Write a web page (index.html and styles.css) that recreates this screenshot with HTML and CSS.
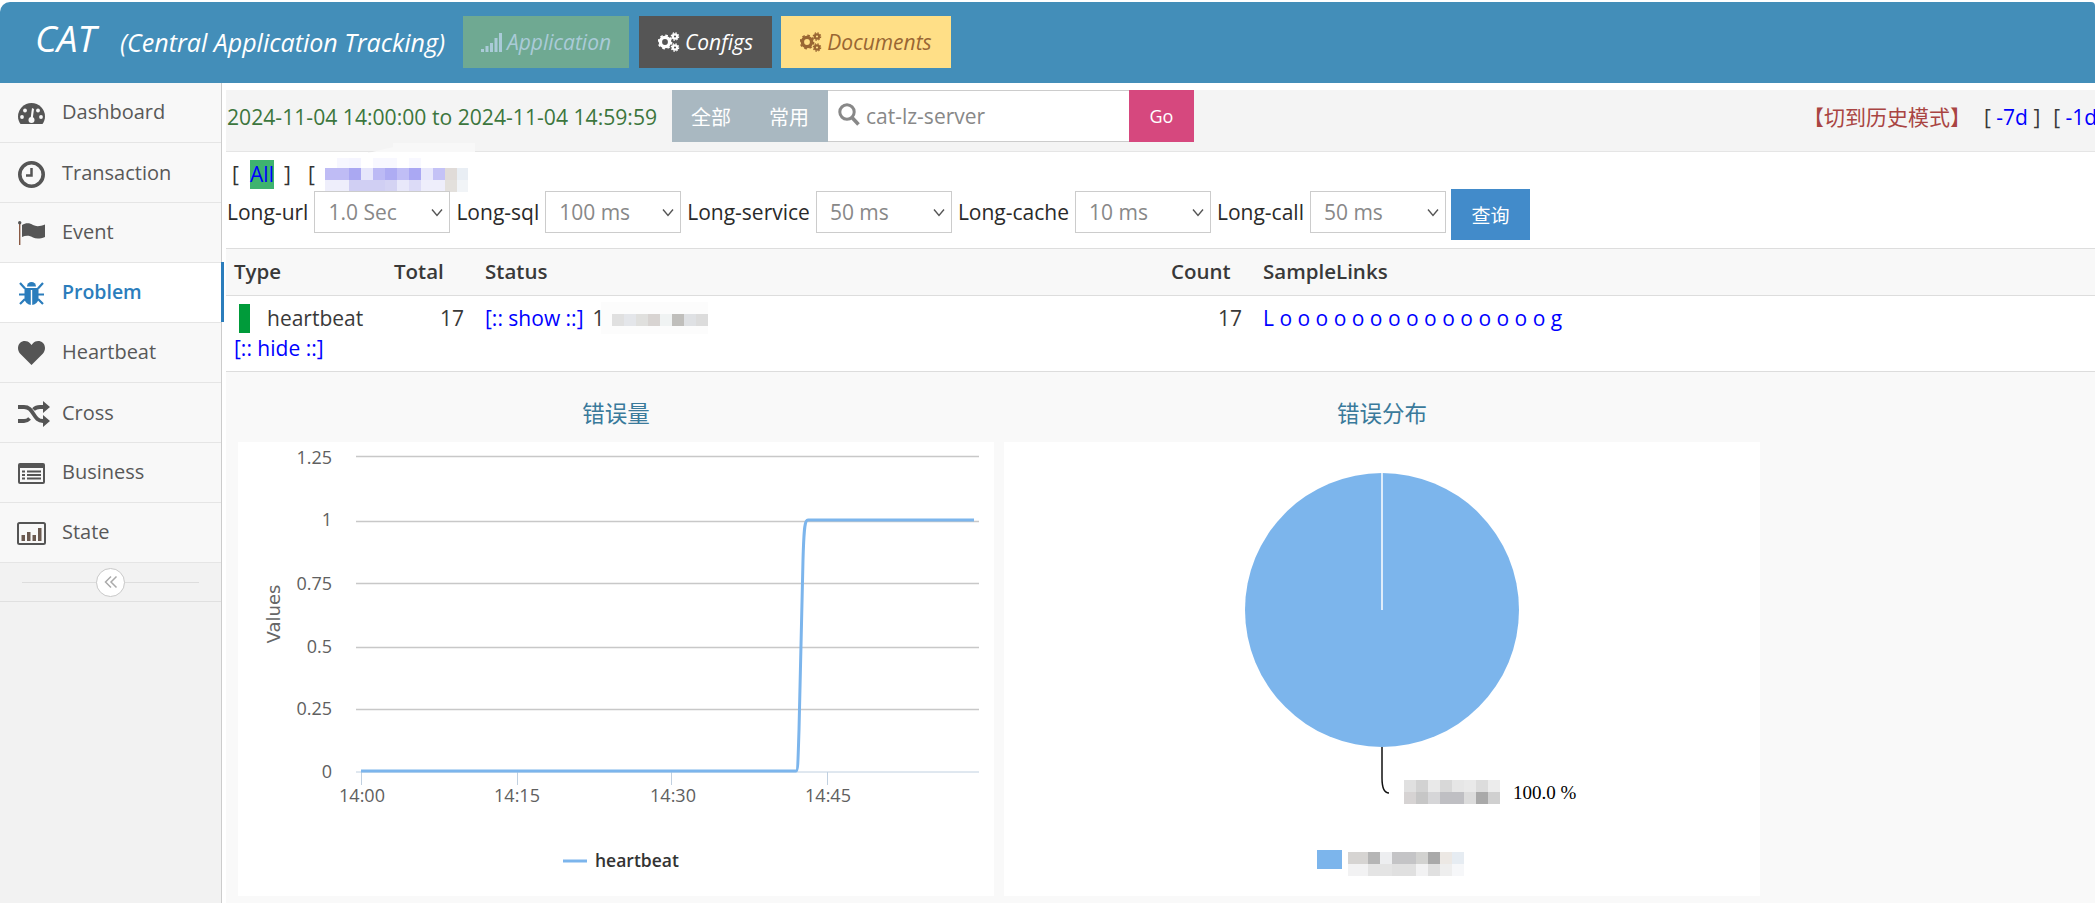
FILE: index.html
```html
<!DOCTYPE html>
<html lang="zh">
<head>
<meta charset="utf-8">
<title>CAT</title>
<link rel="stylesheet" href="styles.css">
</head>
<body>
<svg class="defs" width="0" height="0">
  <symbol id="gears" viewBox="0 0 22 20">
    <circle cx="7" cy="10" r="4.6" fill="none" stroke="currentColor" stroke-width="3.4"/>
    <circle cx="7" cy="10" r="6.6" fill="none" stroke="currentColor" stroke-width="1.6" stroke-dasharray="2.6 2.6"/>
    <circle cx="17" cy="4.5" r="2.2" fill="none" stroke="currentColor" stroke-width="2.2"/>
    <circle cx="17" cy="4.5" r="3.7" fill="none" stroke="currentColor" stroke-width="1.2" stroke-dasharray="1.5 1.4"/>
    <circle cx="17" cy="15.5" r="2.2" fill="none" stroke="currentColor" stroke-width="2.2"/>
    <circle cx="17" cy="15.5" r="3.7" fill="none" stroke="currentColor" stroke-width="1.2" stroke-dasharray="1.5 1.4"/>
  </symbol>
</svg>
<header class="top">
  <div class="brand"><span class="brand-cat">CAT</span><span class="brand-sub">(Central Application Tracking)</span></div>
  <nav class="top-nav">
    <a class="top-btn top-app"><svg class="ico-bars" viewBox="0 0 21 19"><path d="M0 16h3v3H0zM4.500 13h3v6h-3zM9 10h3v9H9zM13.500 5h3v14h-3zM18 0h3v19h-3z" fill="currentColor"/></svg>Application</a>
    <a class="top-btn top-cfg"><svg class="ico-gears"><use href="#gears"/></svg>Configs</a>
    <a class="top-btn top-doc"><svg class="ico-gears"><use href="#gears"/></svg>Documents</a>
  </nav>
</header>
<div class="layout">
  <aside class="sidebar">
    <ul class="menu">
      <li class="menu-item"><span class="menu-ico"><svg width="27" height="21" viewBox="0 0 27 21"><path d="M2.500 21C.8 18.500 0 16 0 13.500a13.500 13.500 0 0 1 27 0c0 2.500-.8 5-2.500 7.500z" fill="currentColor"/><g fill="#f8f8f8"><circle cx="4" cy="14" r="1.900"/><circle cx="7" cy="7.500" r="1.900"/><circle cx="20" cy="7.500" r="1.900"/><circle cx="23" cy="14" r="1.900"/><circle cx="13.500" cy="17" r="3"/><path d="M12.500 16l1.500-11 2 1-1.500 11z"/></g></svg></span>Dashboard</li>
      <li class="menu-item menu-low"><span class="menu-ico"><svg width="27" height="27" viewBox="0 0 27 27"><circle cx="13.500" cy="13.500" r="11.700" fill="none" stroke="currentColor" stroke-width="3.600"/><path d="M13.500 7v7.500H8" fill="none" stroke="currentColor" stroke-width="2.500"/></svg></span>Transaction</li>
      <li class="menu-item"><span class="menu-ico"><svg width="27" height="24" viewBox="0 0 27 24"><path d="M1 2h1.400v22H1z" fill="#8a5a44"/><circle cx="1.700" cy="1.700" r="1.700" fill="currentColor"/><path d="M4 4c4-2.500 8-2 11 0 3 1.700 7 1.500 12-.5v12.500c-5 2-9 2-12 .5-3-2-7-2.500-11-.5z" fill="currentColor"/></svg></span>Event</li>
      <li class="menu-item is-active"><span class="menu-ico"><svg width="25" height="24" viewBox="0 0 25 24"><path d="M8 5.500a4.500 4.500 0 0 1 9 0z" fill="currentColor"/><path d="M5.500 7h14v10a7 7 0 0 1-14 0z" fill="currentColor"/><path d="M12.500 9v15" stroke="#fff" stroke-width="1.400"/><path d="M1 2l5 5.500M24 2l-5 5.500M0 13.500h6M25 13.500h-6M1 23l5-5M24 23l-5-5" stroke="currentColor" stroke-width="2.200" fill="none"/></svg></span>Problem</li>
      <li class="menu-item"><span class="menu-ico"><svg width="27" height="24" viewBox="0 0 27 24"><path d="M13.500 24L2 12.500C-.7 9.500-.6 4.500 2 2c3-2.800 7.500-2.500 10 .3l1.500 1.700L15 2.300c2.500-2.800 7-3.100 10-.3 2.600 2.500 2.700 7.500 0 10.500z" fill="currentColor"/></svg></span>Heartbeat</li>
      <li class="menu-item menu-low"><span class="menu-ico ico-wide"><svg width="32" height="26" viewBox="0 0 32 26"><path d="M0 6h6c5 0 7 3 9.500 7s4.500 7 9.500 7h1M0 20h6c2.500 0 4.200-1 5.600-2.500M15.500 8.500C17 7 19 6 22 6h4" fill="none" stroke="currentColor" stroke-width="3.800"/><path d="M25 0l7 6-7 6zM25 14l7 6-7 6z" fill="currentColor"/></svg></span>Cross</li>
      <li class="menu-item"><span class="menu-ico"><svg width="27" height="21" viewBox="0 0 27 21"><rect width="27" height="21" rx="2" fill="currentColor"/><rect x="2" y="5" width="23" height="14" fill="#f8f8f8"/><path d="M4 7.500h3v2H4zM9 7.500h14v2H9zM4 11h3v2H4zM9 11h14v2H9zM4 14.500h3v2H4zM9 14.500h14v2H9z" fill="currentColor"/></svg></span>Business</li>
      <li class="menu-item"><span class="menu-ico"><svg width="29" height="23" viewBox="0 0 29 23"><rect x="1" y="1" width="27" height="21" rx="1.500" fill="none" stroke="currentColor" stroke-width="2"/><path d="M4.500 13h3.500v6H4.500zM10 10h3.500v9H10zM15.500 13h3.500v6h-3.500zM21 6h3.500v13H21z" fill="#6b5a50"/></svg></span>State</li>
    </ul>
    <div class="collapse"><span class="collapse-btn"><svg width="14" height="14" viewBox="0 0 14 14"><path d="M7 1.500L1.500 7 7 12.500M12.500 1.500L7 7l5.500 5.500" fill="none" stroke="#aaa" stroke-width="1.500"/></svg></span></div>
  </aside>
  <main class="main">
    <div class="crumbs">
      <span class="date-range">2024-11-04 14:00:00 to 2024-11-04 14:59:59</span>
      <div class="search">
        <span class="scope">全部</span><span class="scope">常用</span>
        <div class="search-box"><svg class="ico-search" viewBox="0 0 22 23"><circle cx="9" cy="9" r="7.200" fill="none" stroke="currentColor" stroke-width="3"/><path d="M14 14.500l6.500 7" stroke="currentColor" stroke-width="3.600"/></svg><span class="search-text">cat-lz-server</span></div>
        <span class="go">Go</span>
      </div>
      <div class="history"><span class="history-mode">【切到历史模式】</span><span class="bracket">[ <a>-7d</a> ]</span><span class="bracket">[ <a>-1d</a> ]</span></div>
    </div>
    <section class="filters">
      <div class="domains">
        <span class="br">[</span><a class="all">All</a><span class="br br-close">]</span><span class="br br-next">[</span>
        <svg class="mosaic-domain" width="155" height="36" viewBox="0 0 155 36"><g>
          <path d="M55-5L80-11V-15H162V-6H55z" fill="#f8f8f8"/>
          <rect x="24" y="0" width="12" height="10" fill="#f7f7ff"/><rect x="36" y="0" width="12" height="10" fill="#f5f5ff"/><rect x="60" y="0" width="24" height="10" fill="#f8f8ff"/><rect x="96" y="0" width="12" height="10" fill="#f8f8ff"/>
          <rect x="12" y="10" width="24" height="12" fill="#bfbcf5"/><rect x="36" y="10" width="12" height="12" fill="#aaa8f2"/><rect x="48" y="10" width="12" height="12" fill="#e6e6fb"/><rect x="60" y="10" width="12" height="12" fill="#bcbaf5"/><rect x="72" y="10" width="12" height="12" fill="#aeacf3"/><rect x="84" y="10" width="12" height="12" fill="#c0bef6"/><rect x="96" y="10" width="12" height="12" fill="#aaa8f3"/><rect x="108" y="10" width="12" height="12" fill="#e8e8fb"/><rect x="120" y="10" width="12" height="12" fill="#c4c2f6"/><rect x="132" y="10" width="12" height="12" fill="#e0dbd8"/><rect x="144" y="10" width="11" height="12" fill="#e9eef4"/>
          <rect x="12" y="22" width="24" height="12" fill="#eeeefb"/><rect x="36" y="22" width="36" height="12" fill="#d0cff3"/><rect x="72" y="22" width="12" height="12" fill="#d4d3f3"/><rect x="84" y="22" width="12" height="12" fill="#e8e8fa"/><rect x="96" y="22" width="12" height="12" fill="#dcdbf7"/><rect x="108" y="22" width="24" height="12" fill="#eeeefb"/><rect x="132" y="22" width="12" height="12" fill="#e3e0dc"/><rect x="144" y="22" width="11" height="12" fill="#f1f4f7"/>
        </g></svg>
      </div>
      <form class="thresholds">
        <label class="th-label">Long-url</label><select class="th-select"><option>1.0 Sec</option></select>
        <label class="th-label">Long-sql</label><select class="th-select"><option>100 ms</option></select>
        <label class="th-label">Long-service</label><select class="th-select"><option>50 ms</option></select>
        <label class="th-label">Long-cache</label><select class="th-select"><option>10 ms</option></select>
        <label class="th-label">Long-call</label><select class="th-select"><option>50 ms</option></select>
        <button class="query" type="button">查询</button>
      </form>
    </section>
    <table class="problems">
      <colgroup><col class="c-type"><col class="c-total"><col class="c-status"><col class="c-count"><col></colgroup>
      <thead><tr><th>Type</th><th>Total</th><th>Status</th><th>Count</th><th>SampleLinks</th></tr></thead>
      <tbody><tr>
        <td><div class="type-line"><span class="green-bar"></span>heartbeat</div><a class="lnk">[:: hide ::]</a></td>
        <td class="num">17</td>
        <td><div class="status-line"><a class="lnk">[:: show ::]</a><span class="status-one">1</span><svg class="mosaic-status" width="107" height="32" viewBox="0 0 107 32"><rect width="107" height="32" fill="#fcfcfc"/><rect x="11" y="12" width="12" height="12" fill="#e0e0e0"/><rect x="23" y="12" width="12" height="12" fill="#e4e6ea"/><rect x="35" y="12" width="12" height="12" fill="#e0e0de"/><rect x="47" y="12" width="12" height="12" fill="#d8d4d2"/><rect x="59" y="12" width="12" height="12" fill="#f0f3f3"/><rect x="71" y="12" width="12" height="12" fill="#c0bfbc"/><rect x="83" y="12" width="12" height="12" fill="#dfe1e4"/><rect x="95" y="12" width="12" height="12" fill="#dcdcdc"/></svg></div></td>
        <td class="num">17</td>
        <td><a class="lnk samples">L o o o o o o o o o o o o o o o g</a></td>
      </tr></tbody>
    </table>
    <section class="charts">
      <div class="chart-col">
        <h4 class="chart-title">错误量</h4>
        <div class="chart-card">
          <svg class="chart-svg" width="756" height="454" viewBox="238 442 756 454">
            <g class="grid"><path d="M356 456.500H979M356 521.500H979M356 583.500H979M356 647.500H979M356 709.500H979"/></g>
            <path class="axis" d="M356 772H979M361.500 772v13M517.500 772v13M671.500 772v13M827.500 772v13"/>
            <g class="y-labels"><text x="332" y="464">1.25</text><text x="332" y="526">1</text><text x="332" y="590">0.75</text><text x="332" y="653">0.5</text><text x="332" y="715">0.25</text><text x="332" y="778">0</text></g>
            <g class="x-labels"><text x="362" y="802">14:00</text><text x="517" y="802">14:15</text><text x="673" y="802">14:30</text><text x="828" y="802">14:45</text></g>
            <text class="y-title" transform="translate(280 614) rotate(-90)">Values</text>
            <path class="series" d="M361 771H796C798 771 798 760 799 730L803 560C804 525 805 520 808 520H974"/>
            <path class="legend-line" d="M563 861H587"/>
            <text class="legend-text" x="595" y="867">heartbeat</text>
          </svg>
        </div>
      </div>
      <div class="chart-col">
        <h4 class="chart-title">错误分布</h4>
        <div class="chart-card">
          <svg class="chart-svg" width="756" height="454" viewBox="1004 442 756 454">
            <circle class="pie" cx="1382" cy="610" r="137"/>
            <path class="pie-seam" d="M1382 473V610"/>
            <path class="pie-conn" d="M1382 747V778C1382 788 1384 793 1389 793"/>
            <g>
              <rect x="1404" y="780" width="12" height="12" fill="#e0e0e0"/><rect x="1416" y="780" width="12" height="12" fill="#d2d2d2"/><rect x="1428" y="780" width="12" height="12" fill="#e9e9e9"/><rect x="1440" y="780" width="12" height="12" fill="#d8d8d8"/><rect x="1452" y="780" width="12" height="12" fill="#e6e6e6"/><rect x="1464" y="780" width="12" height="12" fill="#e9e9e9"/><rect x="1476" y="780" width="12" height="12" fill="#dcdcdc"/><rect x="1488" y="780" width="12" height="12" fill="#ececec"/>
              <rect x="1404" y="792" width="12" height="12" fill="#d6d3d3"/><rect x="1416" y="792" width="12" height="12" fill="#c6c6c6"/><rect x="1428" y="792" width="12" height="12" fill="#d6d6d8"/><rect x="1440" y="792" width="24" height="12" fill="#bfbfc3"/><rect x="1464" y="792" width="12" height="12" fill="#dcdcdc"/><rect x="1476" y="792" width="12" height="12" fill="#a9a9a9"/><rect x="1488" y="792" width="12" height="12" fill="#d0d0d0"/>
            </g>
            <text class="pie-label" x="1513" y="799">100.0 %</text>
            <rect class="pie-key" x="1317" y="850" width="25" height="19"/>
            <g>
              <rect x="1348" y="852" width="20" height="12" fill="#d6d4d2"/><rect x="1368" y="852" width="12" height="12" fill="#b5b5b5"/><rect x="1380" y="852" width="12" height="12" fill="#edeef0"/><rect x="1392" y="852" width="24" height="12" fill="#c4c4c6"/><rect x="1416" y="852" width="12" height="12" fill="#d2d2d0"/><rect x="1428" y="852" width="12" height="12" fill="#a9a9a9"/><rect x="1440" y="852" width="12" height="12" fill="#ece8e4"/><rect x="1452" y="852" width="12" height="12" fill="#e6ecf2"/>
              <rect x="1348" y="864" width="20" height="12" fill="#f2f2f3"/><rect x="1368" y="864" width="24" height="12" fill="#e4e4e4"/><rect x="1392" y="864" width="24" height="12" fill="#e0e0e0"/><rect x="1416" y="864" width="12" height="12" fill="#f2f2f3"/><rect x="1428" y="864" width="12" height="12" fill="#e0e0e0"/><rect x="1440" y="864" width="12" height="12" fill="#eeeeee"/><rect x="1452" y="864" width="12" height="12" fill="#f6f7f9"/>
            </g>
          </svg>
        </div>
      </div>
    </section>
  </main>
</div>
</body>
</html>
```
FILE: styles.css
```css
* { box-sizing: border-box; }
html, body { margin: 0; padding: 0; height: 100%; overflow: hidden; }
body {
  background: #fff;
  font-family: "Open Sans", "Noto Sans CJK SC", sans-serif;
  font-size: 21px;
  color: #393939;
  padding-top: 2px;
}
.defs { position: absolute; }
a { color: #0000ff; text-decoration: none; }

/* header */
.top {
  height: 81px;
  background: #438eb9;
  border-top-left-radius: 10px;
  border-top-right-radius: 4px;
  display: flex;
  align-items: center;
  padding-left: 35px;
  color: #fff;
}
.brand { width: 428px; font-style: italic; font-weight: 400; white-space: nowrap; display: flex; align-items: baseline; margin-top: -10px; }
.brand-cat { font-size: 37px; width: 85px; }
.brand-sub { font-size: 25px; }
.top-nav { display: flex; margin-top: -1px; }
.top-btn {
  height: 52px;
  display: flex;
  align-items: center;
  justify-content: center;
  font-style: italic;
  font-size: 21px;
  gap: 5px;
}
.top-app { width: 166px; background: #6fa992; color: #aacbd8; margin-right: 10px; }
.top-cfg { width: 133px; background: #555; color: #fff; margin-right: 9px; }
.top-doc { width: 170px; background: #ffdf87; color: #996633; }
.ico-bars { width: 21px; height: 19px; }
.ico-gears { width: 22px; height: 20px; }

/* layout */
.layout { display: flex; height: 820px; }
.sidebar {
  width: 222px;
  flex: none;
  background: #f2f2f2;
  border-right: 1px solid #ccc;
}
.menu { list-style: none; margin: 0; padding: 0; }
.menu-item {
  position: relative;
  height: 60px;
  padding-bottom: 2px;
  display: flex;
  align-items: center;
  background: #f8f8f8;
  border-bottom: 1px solid #e5e5e5;
  color: #585858;
  font-size: 20px;
}
.menu-item.menu-low { padding-bottom: 0; }
.menu-item.is-active { background: #fff; color: #2b7dbc; font-weight: 600; font-size: 19.500px; }
.menu-item.is-active::after {
  content: "";
  position: absolute;
  right: -3px;
  top: -1px;
  bottom: 0;
  width: 3px;
  background: #2b7dbc;
}
.menu-ico { width: 62px; flex: none; display: flex; justify-content: center; margin-top: 3px; color: #555; }
.menu-ico.ico-wide { padding-left: 5px; }
.is-active .menu-ico { color: #2b7dbc; }
.collapse {
  height: 39px;
  position: relative;
  display: flex;
  align-items: center;
  justify-content: center;
  border-bottom: 1px solid #e0e0e0;
  background: linear-gradient(#ddd, #ddd) center / 177px 1px no-repeat;
}
.collapse-btn {
  width: 29px;
  height: 29px;
  border-radius: 50%;
  background: #fff;
  border: 1px solid #c8c8c8;
  display: flex;
  align-items: center;
  justify-content: center;
}

/* main */
.main { flex: 1; min-width: 0; padding: 7px 0 0 4px; overflow: hidden; }
.crumbs {
  height: 62px;
  background: #f4f4f4;
  border-bottom: 1px solid #e5e5e5;
  display: flex;
  white-space: nowrap;
  overflow: hidden;
}
.date-range { width: 446px; flex: none; padding: 12px 0 0 1px; color: #3c763d; font-size: 21.150px; }
.search { display: flex; height: 52px; flex: none; }
.scope { width: 78px; background: #a9b8c1; color: #fff; font-size: 20px; display: flex; align-items: center; justify-content: center; }
.search-box {
  width: 301px;
  background: #fff;
  border-top: 1px solid #ccc;
  border-bottom: 1px solid #ccc;
  display: flex;
  align-items: center;
  padding-left: 10px;
  color: #888;
}
.ico-search { width: 22px; height: 23px; margin-right: 6px; margin-top: -3px; }
.go { width: 65px; background: #d6487e; color: #fff; font-size: 18px; display: flex; align-items: center; justify-content: center; }
.history { margin-left: 609px; flex: none; padding-top: 11px; }
.history-mode { color: #a94442; margin-right: 13px; }
.bracket { color: #393939; margin-right: 13px; }

.filters { height: 97px; border-bottom: 1px solid #ddd; padding-left: 1px; }
.domains { height: 39px; padding: 8px 0 0 5px; display: flex; color: #333; }
.br { line-height: 29px; width: 7px; font-weight: 500; }
.all { width: 24px; height: 29px; line-height: 29px; background: #3eb36f; text-align: center; margin-left: 11px; }
.br-close { margin-left: 10px; }
.br-next { margin-left: 17px; width: 5px; }
.mosaic-domain { margin-top: -2px; overflow: visible; }
.thresholds { display: flex; align-items: flex-start; height: 51px; }
.th-label { color: #2a2a2a; margin: 0 6px 0 0; line-height: 42px; font-size: 21px; font-weight: 500; white-space: nowrap; }
.th-select {
  appearance: none;
  width: 136px;
  height: 42px;
  margin-right: 6px;
  padding-left: 13px;
  border: 1px solid #ccc;
  background: #fff url("data:image/svg+xml,%3Csvg xmlns='http://www.w3.org/2000/svg' width='12' height='9' viewBox='0 0 12 9'%3E%3Cpath d='M1 1.500l5 6 5-6' fill='none' stroke='%23555' stroke-width='1.400'/%3E%3C/svg%3E") no-repeat right 6px center;
  color: #888;
  font: inherit;
  border-radius: 0;
}
.query { width: 79px; height: 51px; margin: -2px 0 0 -1px; background: #428bca; border: 0; color: #fff; font: inherit; font-size: 19px; }

.problems { width: 100%; border-collapse: collapse; table-layout: fixed; }
.c-type { width: 160px; }
.c-total { width: 91px; }
.c-status { width: 686px; }
.c-count { width: 92px; }
.problems th {
  height: 46px;
  background: #f8f8f8;
  border-bottom: 1px solid #ddd;
  text-align: left;
  padding: 0 0 2px 8px;
  font-weight: 600;
  font-size: 20.500px;
  color: #393939;
}
.problems td { height: 76px; vertical-align: top; padding: 8px 0 0 8px; border-bottom: 1px solid #ddd; }
.problems td.num { text-align: right; padding-right: 13px; padding-top: 8px; }
.type-line { display: flex; align-items: center; height: 29px; padding-left: 5px; margin-bottom: 1px; }
.green-bar { width: 11px; height: 29px; background: #009b3a; margin-right: 17px; }
.lnk { color: #0000ff; }
.status-line { display: flex; align-items: center; height: 29px; white-space: nowrap; }
.status-one { margin-left: 9px; width: 0; }
.mosaic-status { margin-left: 8px; }
.samples { white-space: nowrap; display: inline-block; }

.charts { background: #f9f9f9; height: 540px; display: flex; gap: 10px; padding-left: 12px; }
.chart-col { width: 756px; flex: none; }
.chart-title { margin: 0; height: 70px; padding-top: 27px; text-align: center; font-weight: 400; font-size: 22.500px; line-height: 30px; color: #3a7a9b; }
.chart-card { background: #fff; height: 454px; }
.chart-svg { display: block; }
.chart-svg text { font-family: "Open Sans", sans-serif; }
.grid path { stroke: #c8c8c8; stroke-width: 1.500; fill: none; }
.axis { stroke: #c0d0e0; stroke-width: 1; fill: none; }
.y-labels text { text-anchor: end; font-size: 18px; fill: #606060; }
.x-labels text { text-anchor: middle; font-size: 18px; fill: #606060; }
.chart-svg .y-title { font-family: "DejaVu Sans", sans-serif; text-anchor: middle; font-size: 18px; fill: #666; }
.series { fill: none; stroke: #7cb5ec; stroke-width: 3; }
.legend-line { stroke: #7cb5ec; stroke-width: 3; fill: none; }
.legend-text { font-size: 17.500px; font-weight: 600; fill: #333; }
.pie, .pie-key { fill: #7cb5ec; }
.pie-seam { stroke: #fff; stroke-width: 1.500; fill: none; }
.pie-conn { stroke: #111; stroke-width: 1.500; fill: none; }
.chart-svg .pie-label { font-family: "Liberation Serif", serif; font-size: 19px; fill: #000; }
```
